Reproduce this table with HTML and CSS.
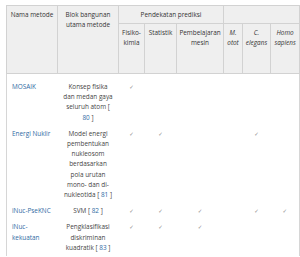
FILE: index.html
```html
<!DOCTYPE html>
<html lang="id">
<head>
<meta charset="utf-8">
<link rel="stylesheet" href="styles.css">
</head>
<body>
<table class="tbl">
  <colgroup>
    <col class="c-name"><col class="c-blok"><col class="c-fis"><col class="c-stat"><col class="c-ml"><col class="c-mo"><col class="c-ce"><col class="c-hs">
  </colgroup>
  <thead>
    <tr class="hr1">
      <th rowspan="2">Nama metode</th>
      <th rowspan="2">Blok bangunan utama metode</th>
      <th colspan="3">Pendekatan prediksi</th>
      <th colspan="3"></th>
    </tr>
    <tr class="hr2">
      <th>Fisiko-kimia</th>
      <th>Statistik</th>
      <th>Pembelajaran mesin</th>
      <th class="it">M. otot</th>
      <th class="it">C. elegans</th>
      <th class="it">Homo sapiens</th>
    </tr>
  </thead>
  <tbody>
    <tr>
      <td class="name">MOSAIK</td>
      <td class="blok">Konsep fisika dan medan gaya seluruh atom [ <span class="ref">80</span> ]</td>
      <td class="chk">✓</td><td></td><td></td><td></td><td></td><td></td>
    </tr>
    <tr>
      <td class="name">Energi Nuklir</td>
      <td class="blok">Model energi pembentukan nukleosom berdasarkan pola urutan mono- dan di-&#8203;nukleotida [ <span class="ref">81</span> ]</td>
      <td class="chk">✓</td><td class="chk">✓</td><td></td><td></td><td class="chk">✓</td><td></td>
    </tr>
    <tr>
      <td class="name">iNuc-PseKNC</td>
      <td class="blok">SVM [ <span class="ref">82</span> ]</td>
      <td class="chk">✓</td><td class="chk">✓</td><td class="chk">✓</td><td></td><td class="chk">✓</td><td class="chk">✓</td>
    </tr>
    <tr>
      <td class="name">iNuc-kekuatan</td>
      <td class="blok">Pengklasifikasi diskriminan kuadratik [ <span class="ref">83</span> ]</td>
      <td class="chk">✓</td><td class="chk">✓</td><td class="chk">✓</td><td></td><td></td><td></td>
    </tr>
  </tbody>
</table>
</body>
</html>
```
FILE: styles.css
```css
html, body {
  margin: 0;
  padding: 0;
  background: #ffffff;
}
body {
  padding: 5px 0 0 6px;
  font-family: "Open Sans", "Noto Sans", sans-serif;
  font-size: 6.4px;
  line-height: 10.2px;
  color: #444;
}
.tbl {
  table-layout: fixed;
  border-collapse: collapse;
  width: 293px;
  border-left: 1px solid #d6d6d6;
  border-right: 1px solid #d6d6d6;
}
.c-name { width: 51px; }
.c-blok { width: 61px; }
.c-fis { width: 26px; }
.c-stat { width: 32px; }
.c-ml { width: 47px; }
.c-mo { width: 19px; }
.c-ce { width: 28px; }
.c-hs { width: 29px; }

.tbl th {
  background: #efefef;
  border: 1px solid #d2d2d2;
  font-weight: 500;
  color: #333;
  text-align: center;
  vertical-align: top;
  padding: 4px 2px 2px;
}
.tbl th.it { font-style: italic; font-weight: 400; }
.hr1 { height: 18px; }
.hr2 { height: 50px; }

.tbl td {
  vertical-align: top;
  padding: 3px 3px 3px;
  border: none;
}
.tbl tbody tr:first-child td { padding-top: 8px; }
.tbl td.name {
  color: #2f6aa3;
  padding-left: 5px;
  text-align: left;
}
.tbl td.blok {
  text-align: center;
  padding-left: 5px;
  padding-right: 5px;
}
.tbl td.chk {
  text-align: center;
  color: #8a8a8a;
  font-family: "DejaVu Sans", sans-serif;
  font-size: 5.5px;
}
.ref { color: #2f6aa3; }
```
